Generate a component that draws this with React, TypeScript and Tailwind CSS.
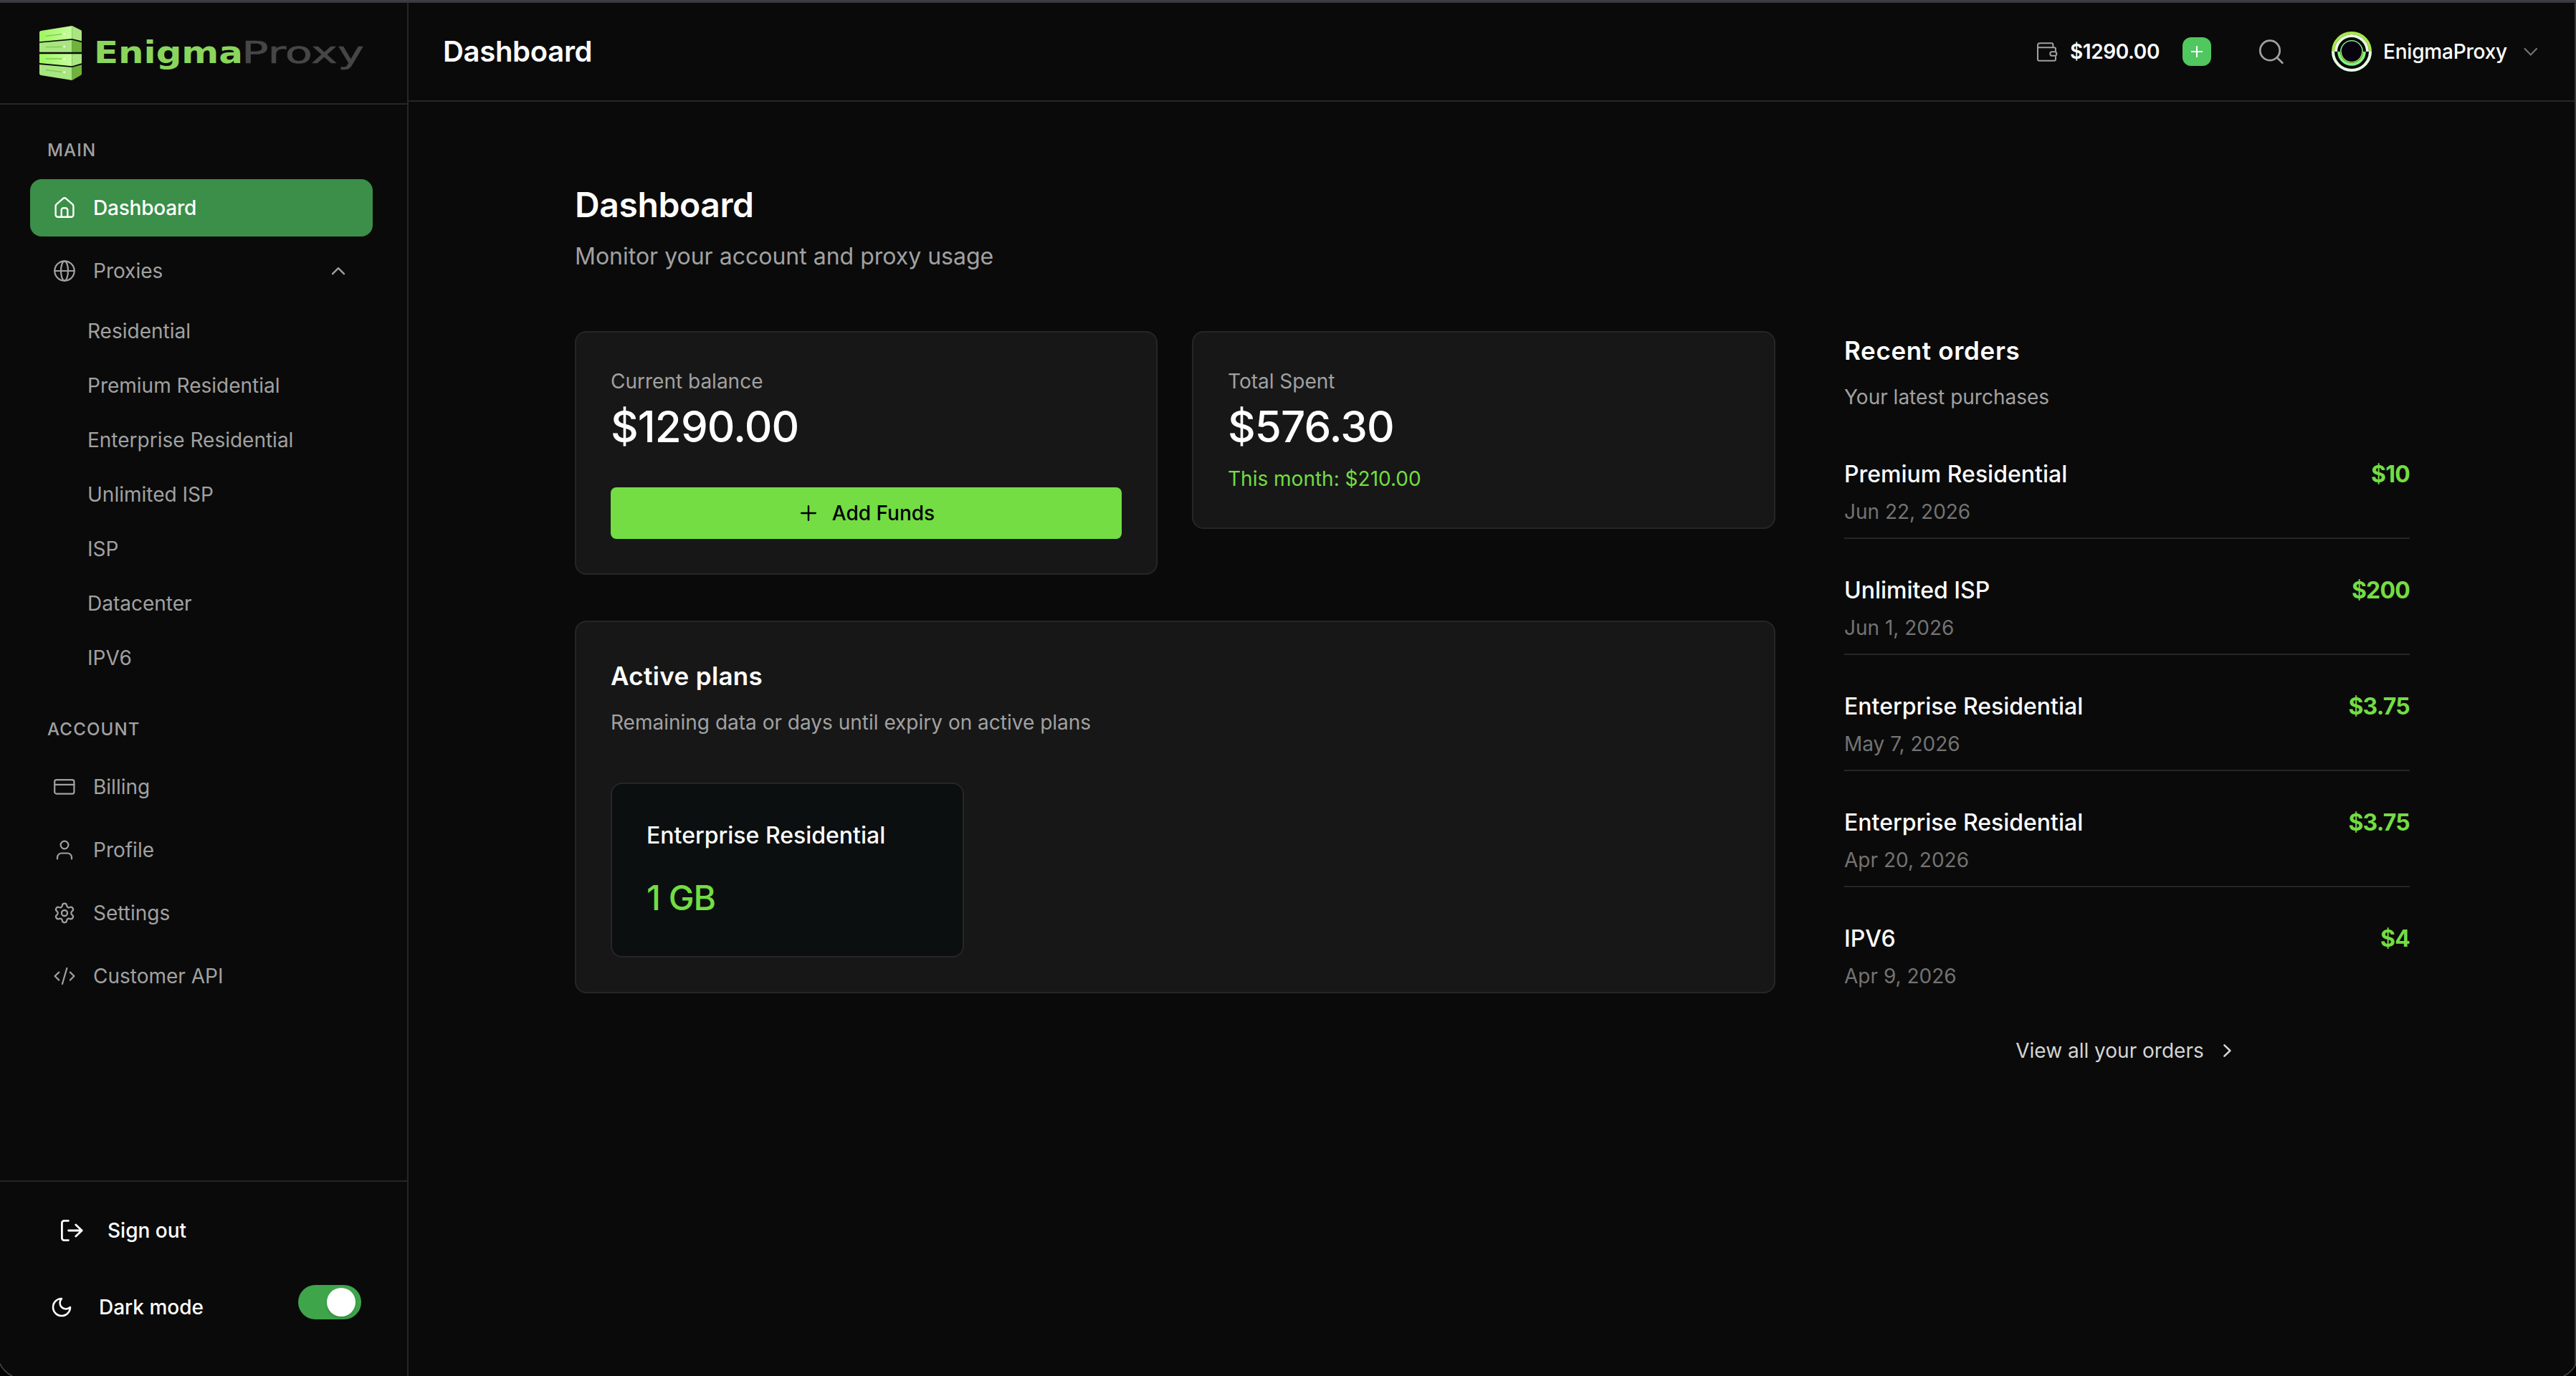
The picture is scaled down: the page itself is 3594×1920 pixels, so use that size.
import type { ReactNode } from "react";
import { Settings } from "lucide-react";

interface Order {
  name: string;
  date: string;
  amount: string;
}

const proxyLinks = [
  "Residential",
  "Premium Residential",
  "Enterprise Residential",
  "Unlimited ISP",
  "ISP",
  "Datacenter",
  "IPV6",
];

const orders: Order[] = [
  { name: "Premium Residential", date: "Jun 22, 2026", amount: "$10" },
  { name: "Unlimited ISP", date: "Jun 1, 2026", amount: "$200" },
  { name: "Enterprise Residential", date: "May 7, 2026", amount: "$3.75" },
  { name: "Enterprise Residential", date: "Apr 20, 2026", amount: "$3.75" },
  { name: "IPV6", date: "Apr 9, 2026", amount: "$4" },
];

function Icon({ children, width = 2.2 }: { children: ReactNode; width?: number }) {
  return (
    <svg
      className="w-8 h-8 shrink-0"
      viewBox="0 0 32 32"
      fill="none"
      stroke="currentColor"
      strokeWidth={width}
      strokeLinecap="round"
      strokeLinejoin="round"
    >
      {children}
    </svg>
  );
}

function Logo() {
  return (
    <div className="flex items-center">
      <svg className="w-[59px] h-[76px]" viewBox="75 48 177 228">
        <defs>
          <linearGradient id="face" x1="0" x2="1">
            <stop offset="0" stopColor="#9ff561" />
            <stop offset="1" stopColor="#c5fd9b" />
          </linearGradient>
        </defs>
        <path d="M75 76q0-6 6-7L212 48v54L75 115z" fill="url(#face)" />
        <path d="M212 48l36 18q4 2 4 6v40l-40-10z" fill="#a8e681" />
        <path d="M75 119l137-12v51H75z" fill="#a8e681" />
        <path d="M212 107l40 11v40h-40z" fill="#70b23c" />
        <path d="M75 166h137v51L75 204z" fill="url(#face)" />
        <path d="M212 166h40v39l-40 12z" fill="#a8e681" />
        <path d="M75 210l137 12v54L81 255q-6-1-6-7z" fill="#a8e681" />
        <path d="M212 222l40-11v38q0 4-4 6l-36 21z" fill="#70b23c" />
        <g stroke="#7fc653" strokeWidth="4">
          <path d="M101 91l68-8M101 137l68-1M101 186h68M101 233l68 8" />
        </g>
        <g fill="#f3ffe9">
          <circle cx="179" cy="82" r="4" />
          <circle cx="179" cy="135" r="4" />
          <circle cx="179" cy="188" r="4" />
          <circle cx="179" cy="242" r="4" />
        </g>
      </svg>
      <svg className="w-[400px] h-[76px] font-['DejaVu_Sans']" viewBox="0 0 400 76">
        <text
          x="17"
          y="52"
          fontSize="42"
          fontWeight="700"
          fill="#8ad65c"
          textLength="208"
          lengthAdjust="spacingAndGlyphs"
        >
          Enigma
        </text>
        <text
          x="223"
          y="52"
          fontSize="42"
          fill="#464646"
          stroke="#464646"
          strokeWidth="0.6"
          textLength="171"
          lengthAdjust="spacingAndGlyphs"
        >
          Proxy
        </text>
      </svg>
    </div>
  );
}

function NavItem({
  icon,
  label,
  active = false,
  trailing,
}: {
  icon: ReactNode;
  label: string;
  active?: boolean;
  trailing?: ReactNode;
}) {
  return (
    <a
      className={`flex items-center h-20 pl-8 pr-8 rounded-2xl text-[28px] ${
        active ? "bg-[#3b8f48] text-white font-medium tracking-[-0.2px]" : "text-[#a1a1a1]"
      }`}
    >
      {icon}
      <span className="ml-6 flex-1">{label}</span>
      {trailing}
    </a>
  );
}

function Sidebar() {
  return (
    <aside className="w-[570px] shrink-0 border-r-2 border-[#262626] flex flex-col">
      <div className="h-[142px] shrink-0 border-b-2 border-[#262626] pl-[55px] flex items-center">
        <Logo />
      </div>

      <nav className="flex-1 pl-[42px] pr-12 pt-12">
        <p className="pl-6 mb-6 text-2xl leading-8 font-medium tracking-wider text-[#a1a1a1]">
          MAIN
        </p>
        <div className="flex flex-col gap-2">
          <NavItem
            active
            label="Dashboard"
            icon={
              <Icon width={2.4}>
                <path d="M3.6 13.8c0-1 .4-1.9 1.1-2.6l8.9-7.9c1.4-1.2 3.4-1.2 4.8 0l8.9 7.9c.7.7 1.1 1.6 1.1 2.6v12a3 3 0 0 1-3 3H6.6a3 3 0 0 1-3-3z" />
                <path d="M11.7 28.6v-9.4a3 3 0 0 1 3-3h2.6a3 3 0 0 1 3 3v9.4" />
              </Icon>
            }
          />
          <NavItem
            label="Proxies"
            icon={
              <Icon>
                <circle cx="16" cy="16" r="13.7" />
                <ellipse cx="16" cy="16" rx="5" ry="13.7" />
                <path d="M2.3 16h27.4" />
              </Icon>
            }
            trailing={
              <Icon width={2.4}>
                <path d="M8 20.2l8-8 8 8" />
              </Icon>
            }
          />
        </div>
        <div className="flex flex-col pt-1.5 pl-20">
          {proxyLinks.map((link) => (
            <a key={link} className="h-[76px] flex items-center text-[28px] text-[#a1a1a1]">
              {link}
            </a>
          ))}
        </div>

        <p className="pl-6 mt-[46px] mb-6 text-2xl leading-8 font-medium tracking-wider text-[#a1a1a1]">
          ACCOUNT
        </p>
        <div className="flex flex-col gap-2">
          <NavItem
            label="Billing"
            icon={
              <Icon>
                <rect x="2.2" y="6.2" width="27.2" height="19.4" rx="2.6" />
                <path d="M2.2 12.8h27.2" />
              </Icon>
            }
          />
          <NavItem
            label="Profile"
            icon={
              <Icon>
                <circle cx="16" cy="9" r="5.4" />
                <path d="M6 28.4v-1.9a6 6 0 0 1 6-6h8a6 6 0 0 1 6 6v1.9" />
              </Icon>
            }
          />
          <NavItem
            label="Settings"
            icon={<Settings className="w-8 h-8" strokeWidth={1.7} />}
          />
          <NavItem
            label="Customer API"
            icon={
              <Icon>
                <path d="M8.3 10.6L2.6 16l5.7 5.6M23.9 10.6l5.5 5.4-5.5 5.6M19.3 5l-6.4 22" />
              </Icon>
            }
          />
        </div>
      </nav>

      <div className="h-[273px] shrink-0 border-t-2 border-[#262626] pt-7 text-[28px] font-medium text-white">
        <div className="h-20 pl-[84px] flex items-center">
          <Icon width={2.8}>
            <path d="M11.4 2.4H5.6a3.2 3.2 0 0 0-3.2 3.2v20.8a3.2 3.2 0 0 0 3.2 3.2h5.8" />
            <path d="M11.6 16h18.6M21.8 8l8.4 8-8.4 8" />
          </Icon>
          <span className="ml-[34px]">Sign out</span>
        </div>
        <div className="mt-9 pl-[70px] pr-16 flex items-start">
          <div className="h-[62px] flex items-center">
            <svg
              className="w-8 h-8"
              viewBox="0 0 24 24"
              fill="none"
              stroke="currentColor"
              strokeWidth={1.9}
              strokeLinecap="round"
              strokeLinejoin="round"
            >
              <path d="M12 3a6 6 0 0 0 9 9 9 9 0 1 1-9-9Z" />
            </svg>
            <span className="ml-9">Dark mode</span>
          </div>
          <div className="ml-auto w-[88px] h-12 p-1 pr-2 rounded-full bg-[#3fa54b] flex justify-end">
            <div className="w-10 h-10 rounded-full bg-white shadow-md" />
          </div>
        </div>
      </div>
    </aside>
  );
}

function Avatar() {
  return (
    <svg className="w-14 h-14" viewBox="0 0 56 56" fill="none">
      <circle cx="28" cy="28" r="27.5" fill="#050505" />
      <path d="M2 28a26 26 0 0 1 52 0" stroke="#a9e84a" strokeWidth="4" />
      <path d="M6 28a22 22 0 0 1 44 0" stroke="#e6fde3" strokeWidth="4" />
      <path d="M2 28a26 26 0 0 0 52 0" stroke="#e6fde3" strokeWidth="4" />
      <circle cx="28" cy="28" r="14.8" fill="#07030f" />
      <path d="M12.8 28a15.2 15.2 0 0 1 30.4 0" stroke="#78f088" strokeWidth="1.6" />
      <path d="M10.2 28a17.8 17.8 0 0 0 35.6 0" stroke="#80f67f" strokeWidth="4" />
      <path d="M13.2 28a14.8 14.8 0 0 0 29.6 0" stroke="#a2dc46" strokeWidth="1.6" />
    </svg>
  );
}

function Header() {
  return (
    <header className="h-[138px] shrink-0 border-b-2 border-[#262626] pl-12 pr-[46px] flex items-center justify-between text-white">
      <h2 className="text-[40px] font-semibold tracking-[-0.3px]">Dashboard</h2>
      <div className="flex items-center text-[28px]">
        <svg
          className="w-8 h-[31px] text-[#a1a1a1]"
          viewBox="60 110 96 92"
          fill="none"
          stroke="currentColor"
          strokeWidth="6"
        >
          <path d="M69 128v58a7 7 0 0 0 7 7h61a7 7 0 0 0 7-7v-12M144 154v-11a6 6 0 0 0-6-6H70" />
          <path d="M69 130v-2a9 9 0 0 1 9-9h49a6 6 0 0 1 6 6v12" />
          <rect x="121" y="155" width="27" height="17" rx="8" />
        </svg>
        <span className="ml-4 w-[125px] font-semibold tracking-[-0.4px]">$1290.00</span>
        <button className="ml-8 w-10 h-10 rounded-xl bg-[#50c75f] flex items-center justify-center">
          <svg className="w-4 h-4" viewBox="0 0 16 16" stroke="currentColor" strokeWidth="2">
            <path d="M8 0v16M0 8h16" />
          </svg>
        </button>
        <svg
          className="ml-[66px] w-9 h-9 text-[#a1a1a1]"
          viewBox="0 0 36 36"
          fill="none"
          stroke="currentColor"
          strokeWidth="2.7"
          strokeLinecap="round"
        >
          <circle cx="16" cy="16.4" r="13.7" />
          <path d="M25.8 26.2l7.6 7.6" />
        </svg>
        <div className="ml-[66px]">
          <Avatar />
        </div>
        <span className="ml-4 w-[175px] font-medium tracking-[-0.2px]">EnigmaProxy</span>
        <svg
          className="ml-[14px] w-8 h-8 text-[#737373]"
          viewBox="0 0 32 32"
          fill="none"
          stroke="currentColor"
          strokeWidth="2.2"
          strokeLinecap="round"
        >
          <path d="M8.6 12l8.2 8.4L25 12" />
        </svg>
      </div>
    </header>
  );
}

function OrderRow({ order, last }: { order: Order; last: boolean }) {
  return (
    <div className={`flex justify-between ${last ? "" : "pb-4 border-b-2 border-[#262626]"}`}>
      <div>
        <p className="text-[32px] leading-[48px] font-medium text-white">{order.name}</p>
        <p className="mt-2 text-[28px] leading-10 text-[#737373]">{order.date}</p>
      </div>
      <p className="text-[32px] leading-[48px] font-bold tracking-[-0.8px] text-[#73dd43]">
        {order.amount}
      </p>
    </div>
  );
}

export default function App() {
  return (
    <div className="relative w-[3594px] h-[1920px] overflow-hidden bg-[#0a0a0a] font-[Inter,sans-serif] flex flex-col">
      <div className="h-1 shrink-0 bg-[#36363a] border-t-2 border-[#3f3e45]" />
      <div className="flex-1 min-h-0 flex border-r-2 border-[#3a3a3a]">
        <Sidebar />
        <div className="flex-1 flex flex-col">
          <Header />

          <main className="w-[2560px] ml-[232px] pt-[114px]">
            <h1 className="text-5xl leading-[60px] font-semibold tracking-[-0.4px] text-white">
              Dashboard
            </h1>
            <p className="mt-[18px] text-[32px] leading-[48px] text-[#a1a1a1]">
              Monitor your account and proxy usage
            </p>

            <div className="mt-20 flex justify-between">
              <div className="w-[1675px]">
                <div className="grid grid-cols-[813px_814px] gap-12 items-start">
                  <div className="p-12 rounded-2xl bg-[#171717] border-2 border-[#262626]">
                    <p className="text-[28px] leading-10 text-[#a1a1a1]">Current balance</p>
                    <p className="mt-[3px] text-6xl leading-[80px] font-medium tracking-[-0.9px] text-white">
                      $1290.00
                    </p>
                    <button className="mt-[45px] w-full h-[72px] pl-1 rounded-lg bg-[#73dd43] flex items-center justify-center gap-[22px] text-[28px] font-medium text-black">
                      <svg
                        className="w-[22px] h-[22px]"
                        viewBox="0 0 22 22"
                        stroke="currentColor"
                        strokeWidth="2.4"
                        strokeLinecap="round"
                      >
                        <path d="M11 1.2v19.6M1.2 11h19.6" />
                      </svg>
                      Add Funds
                    </button>
                  </div>

                  <div className="p-12 rounded-2xl bg-[#171717] border-2 border-[#262626]">
                    <p className="text-[28px] leading-10 text-[#a1a1a1]">Total Spent</p>
                    <p className="mt-[3px] text-6xl leading-[80px] font-medium tracking-[-0.9px] text-white">
                      $576.30
                    </p>
                    <p className="mt-[13px] text-[28px] leading-10 text-[#73dd43]">
                      This month: $210.00
                    </p>
                  </div>
                </div>

                {/* Active plans */}
                <div className="mt-16 p-12 rounded-2xl bg-[#171717] border-2 border-[#262626]">
                  <h3 className="text-[35px] leading-[55px] font-semibold tracking-[0.35px] text-white">
                    Active plans
                  </h3>
                  <p className="mt-[17px] text-[28px] leading-10 text-[#a1a1a1]">
                    Remaining data or days until expiry on active plans
                  </p>
                  <div className="mt-16 w-[493px] p-12 rounded-2xl bg-[#0b0f10] border-2 border-[#262626]">
                    <p className="text-[32px] leading-[48px] font-medium text-white">
                      Enterprise Residential
                    </p>
                    <p className="mt-[30px] text-5xl leading-[66px] font-medium tracking-[-1px] text-[#73dd43]">
                      1 GB
                    </p>
                  </div>
                </div>
              </div>

              {/* Recent orders */}
              <div className="w-[789px]">
                <h3 className="text-[35px] leading-[54px] font-semibold tracking-[0.65px] text-white">
                  Recent orders
                </h3>
                <p className="mt-[18px] text-[28px] leading-10 text-[#a1a1a1]">
                  Your latest purchases
                </p>
                <div className="mt-16 flex flex-col gap-12">
                  {orders.map((order, i) => (
                    <OrderRow key={order.date} order={order} last={i === orders.length - 1} />
                  ))}
                </div>
                <a className="mt-16 flex items-center justify-center gap-4 text-[28px] leading-10 text-[#d4d4d4]">
                  View all your orders
                  <Icon width={2.6}>
                    <path d="M12.4 8.4l8 7.6-8 7.6" />
                  </Icon>
                </a>
              </div>
            </div>
          </main>
        </div>
      </div>

      {/* Rounded window corners */}
      <svg className="absolute left-0 bottom-0 w-[18px] h-[18px]" viewBox="0 0 18 18">
        <path d="M0 1Q5 12 17 18H0z" fill="#000" />
        <path d="M0 1Q5 12 17 18" fill="none" stroke="#4a4a4a" strokeWidth="1.6" />
      </svg>
      <svg className="absolute right-0 bottom-0 w-[18px] h-[18px]" viewBox="0 0 18 18">
        <path d="M18 1Q13 12 1 18H18z" fill="#000" />
        <path d="M18 1Q13 12 1 18" fill="none" stroke="#4a4a4a" strokeWidth="1.6" />
      </svg>
    </div>
  );
}
